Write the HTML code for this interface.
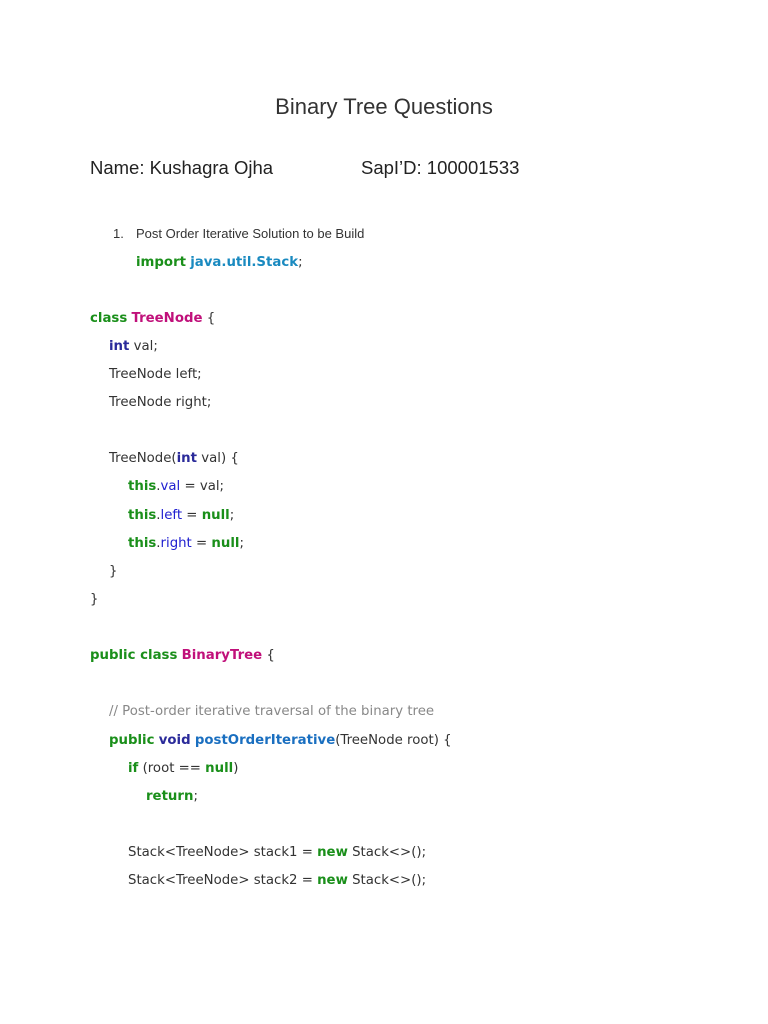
<!DOCTYPE html>
<html><head><meta charset="utf-8"><style>
body{margin:0;width:768px;height:1024px;background:#fff;position:relative;overflow:hidden;color:#333}
.t{position:absolute;white-space:pre;font-family:"Liberation Sans",sans-serif}
.c{position:absolute;white-space:pre;font-family:"DejaVu Sans",Verdana,sans-serif;font-size:13.3px;line-height:18px;color:#333}
.k{color:#1a8f1a;font-weight:bold}
.n{color:#c0107a;font-weight:bold}
.p{color:#2a2a9a;font-weight:bold}
.f{color:#1a6fc0;font-weight:bold}
.v{color:#2020d0}
.i{color:#1a8ac0;font-weight:bold}
.m{color:#888}
</style></head><body>
<div class="t" style="left:0;width:768px;text-align:center;top:94px;font-size:22px;color:#333">Binary Tree Questions</div>
<div class="t" style="left:90px;top:157px;font-size:18.5px;color:#222">Name: Kushagra Ojha</div>
<div class="t" style="left:361px;top:157px;font-size:18.5px;color:#222">SapI’D: 100001533</div>
<div class="t" style="left:113px;top:226px;font-size:13px;color:#333">1.</div>
<div class="t" style="left:136px;top:226px;font-size:13px;color:#333">Post Order Iterative Solution to be Build</div>
<div class="c" style="left:136px;top:254px"><span class="k">import</span> <span class="i">java.util.Stack</span>;</div>
<div class="c" style="left:90px;top:310px"><span class="k">class</span> <span class="n">TreeNode</span> {</div>
<div class="c" style="left:109px;top:338px"><span class="p">int</span> val;</div>
<div class="c" style="left:109px;top:366px">TreeNode left;</div>
<div class="c" style="left:109px;top:394px">TreeNode right;</div>
<div class="c" style="left:109px;top:450px">TreeNode(<span class="p">int</span> val) {</div>
<div class="c" style="left:128px;top:478px"><span class="k">this</span>.<span class="v">val</span> = val;</div>
<div class="c" style="left:128px;top:507px"><span class="k">this</span>.<span class="v">left</span> = <span class="k">null</span>;</div>
<div class="c" style="left:128px;top:535px"><span class="k">this</span>.<span class="v">right</span> = <span class="k">null</span>;</div>
<div class="c" style="left:109px;top:563px">}</div>
<div class="c" style="left:90px;top:591px">}</div>
<div class="c" style="left:90px;top:647px"><span class="k">public class</span> <span class="n">BinaryTree</span> {</div>
<div class="c" style="left:109px;top:703px"><span class="m">// Post-order iterative traversal of the binary tree</span></div>
<div class="c" style="left:109px;top:732px"><span class="k">public</span> <span class="p">void</span> <span class="f">postOrderIterative</span>(TreeNode root) {</div>
<div class="c" style="left:128px;top:760px"><span class="k">if</span> (root == <span class="k">null</span>)</div>
<div class="c" style="left:146px;top:788px"><span class="k">return</span>;</div>
<div class="c" style="left:128px;top:844px">Stack&lt;TreeNode&gt; stack1 = <span class="k">new</span> Stack&lt;&gt;();</div>
<div class="c" style="left:128px;top:872px">Stack&lt;TreeNode&gt; stack2 = <span class="k">new</span> Stack&lt;&gt;();</div>
</body></html>
